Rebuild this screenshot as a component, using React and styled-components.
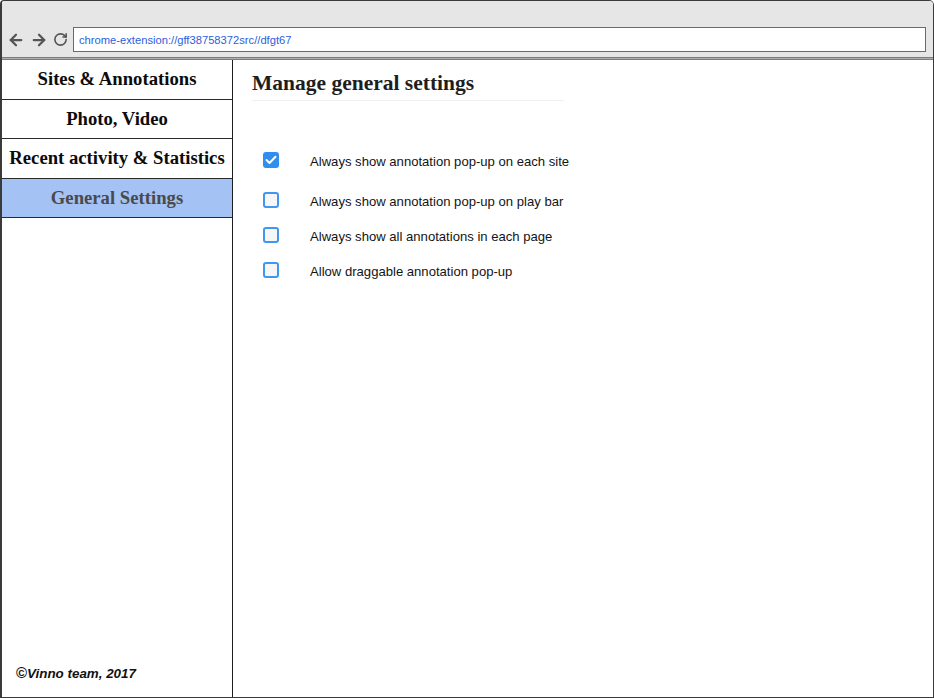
import React from "react";
import styled, { createGlobalStyle } from "styled-components";
import { ArrowLeft, ArrowRight, RotateCw } from "lucide-react";

const Global = createGlobalStyle`
  html, body { margin: 0; padding: 0; background: #fff; }
  * { box-sizing: border-box; }
`;

const Frame = styled.div`
  width: 934px;
  height: 698px;
  border: 1px solid #3a3a3a;
  border-left-width: 2px;
  border-radius: 4px 5px 0 0;
  display: flex;
  flex-direction: column;
  overflow: hidden;
  background: #fff;
`;

const TopBar = styled.div`
  height: 56px;
  background: #e6e6e6;
  display: flex;
  align-items: flex-end;
  padding: 0 7px 5px 5px;
`;

const NavIcons = styled.div`
  display: flex;
  align-items: center;
  gap: 5px;
  height: 25px;
  color: #555;
  margin-right: 5px;
`;

const AddressBox = styled.div`
  flex: 1;
  height: 25px;
  border: 1px solid #6a6a6a;
  background: #fff;
  display: flex;
  align-items: center;
  padding-left: 5px;
  font-family: "Liberation Sans", Arial, sans-serif;
  font-size: 11.2px;
  color: #2b5ee0;
`;

const Divider = styled.div`
  height: 3px;
  background: #b0b0b0;
  border-top: 1px solid #7c7c7c;
  border-bottom: 1px solid #7c7c7c;
`;

const Body = styled.div`
  flex: 1;
  display: flex;
  min-height: 0;
`;

const Sidebar = styled.nav`
  width: 231px;
  border-right: 1px solid #1e1e1e;
  display: flex;
  flex-direction: column;
`;

const NavItem = styled.div`
  height: 39.5px;
  border-bottom: 1px solid #2a2a2a;
  display: flex;
  align-items: center;
  justify-content: center;
  font-family: "Liberation Serif", "Times New Roman", serif;
  font-weight: bold;
  font-size: 18.7px;
  color: ${(p) => (p.$active ? "#4a4a4a" : "#0c0c0c")};
  background: ${(p) => (p.$active ? "#a4c2f4" : "#fff")};
  white-space: nowrap;
`;

const Footer = styled.div`
  margin-top: auto;
  padding: 0 0 16px 14px;
  font-family: "Liberation Sans", Arial, sans-serif;
  font-size: 13.4px;
  font-weight: bold;
  font-style: italic;
  color: #111;
`;

const Copy = styled.span`
  font-style: normal;
  font-size: 15px;
`;

const Main = styled.main`
  flex: 1;
  padding: 11px 0 0 19px;
`;

const Heading = styled.h1`
  margin: 0;
  width: 312px;
  padding-bottom: 4px;
  border-bottom: 1px solid #f0f0f0;
  font-family: "Liberation Serif", "Times New Roman", serif;
  font-weight: bold;
  font-size: 21.5px;
  color: #1e1e1e;
`;

const OptionList = styled.div`
  display: flex;
  flex-direction: column;
  margin-top: 50px;
  padding-left: 11px;
`;

const Option = styled.label`
  display: flex;
  align-items: center;
  height: 18px;
  margin-bottom: ${(p) => (p.$first ? "22px" : "17px")};
  font-family: "Liberation Sans", Arial, sans-serif;
  font-size: 13.1px;
  color: #141414;
`;

const LabelText = styled.span`
  padding-top: 2px;
`;

const Box = styled.span`
  width: 16px;
  height: 16px;
  border-radius: 3px;
  margin-right: 31px;
  display: inline-flex;
  align-items: center;
  justify-content: center;
  border: ${(p) => (p.$checked ? "none" : "2px solid #3f97ee")};
  background: ${(p) => (p.$checked ? "#2f8ff0" : "#f6f6f6")};
`;

const options = [
  { label: "Always show annotation pop-up on each site", checked: true },
  { label: "Always show annotation pop-up on play bar", checked: false },
  { label: "Always show all annotations in each page", checked: false },
  { label: "Allow draggable annotation pop-up", checked: false },
];

const navItems = [
  "Sites & Annotations",
  "Photo, Video",
  "Recent activity & Statistics",
  "General Settings",
];

export default function App() {
  return (
    <>
      <Global />
      <Frame>
        <TopBar>
          <NavIcons>
            <ArrowLeft size={18} strokeWidth={3} />
            <ArrowRight size={18} strokeWidth={3} />
            <RotateCw size={15} strokeWidth={2.6} />
          </NavIcons>
          <AddressBox>chrome-extension://gff38758372src//dfgt67</AddressBox>
        </TopBar>
        <Divider />
        <Body>
          <Sidebar>
            {navItems.map((n) => (
              <NavItem key={n} $active={n === "General Settings"}>
                {n}
              </NavItem>
            ))}
            <Footer>
              <Copy>©</Copy>Vinno team, 2017
            </Footer>
          </Sidebar>
          <Main>
            <Heading>Manage general settings</Heading>
            <OptionList>
              {options.map((o, i) => (
                <Option key={o.label} $first={i === 0}>
                  <Box $checked={o.checked}>
                    {o.checked && (
                      <svg width="12" height="10" viewBox="0 0 12 10">
                        <path d="M1.5 5 L4.5 8 L10.5 1.8" fill="none" stroke="#fff" strokeWidth="2" strokeLinecap="round" strokeLinejoin="round" />
                      </svg>
                    )}
                  </Box>
                  <LabelText>{o.label}</LabelText>
                </Option>
              ))}
            </OptionList>
          </Main>
        </Body>
      </Frame>
    </>
  );
}
